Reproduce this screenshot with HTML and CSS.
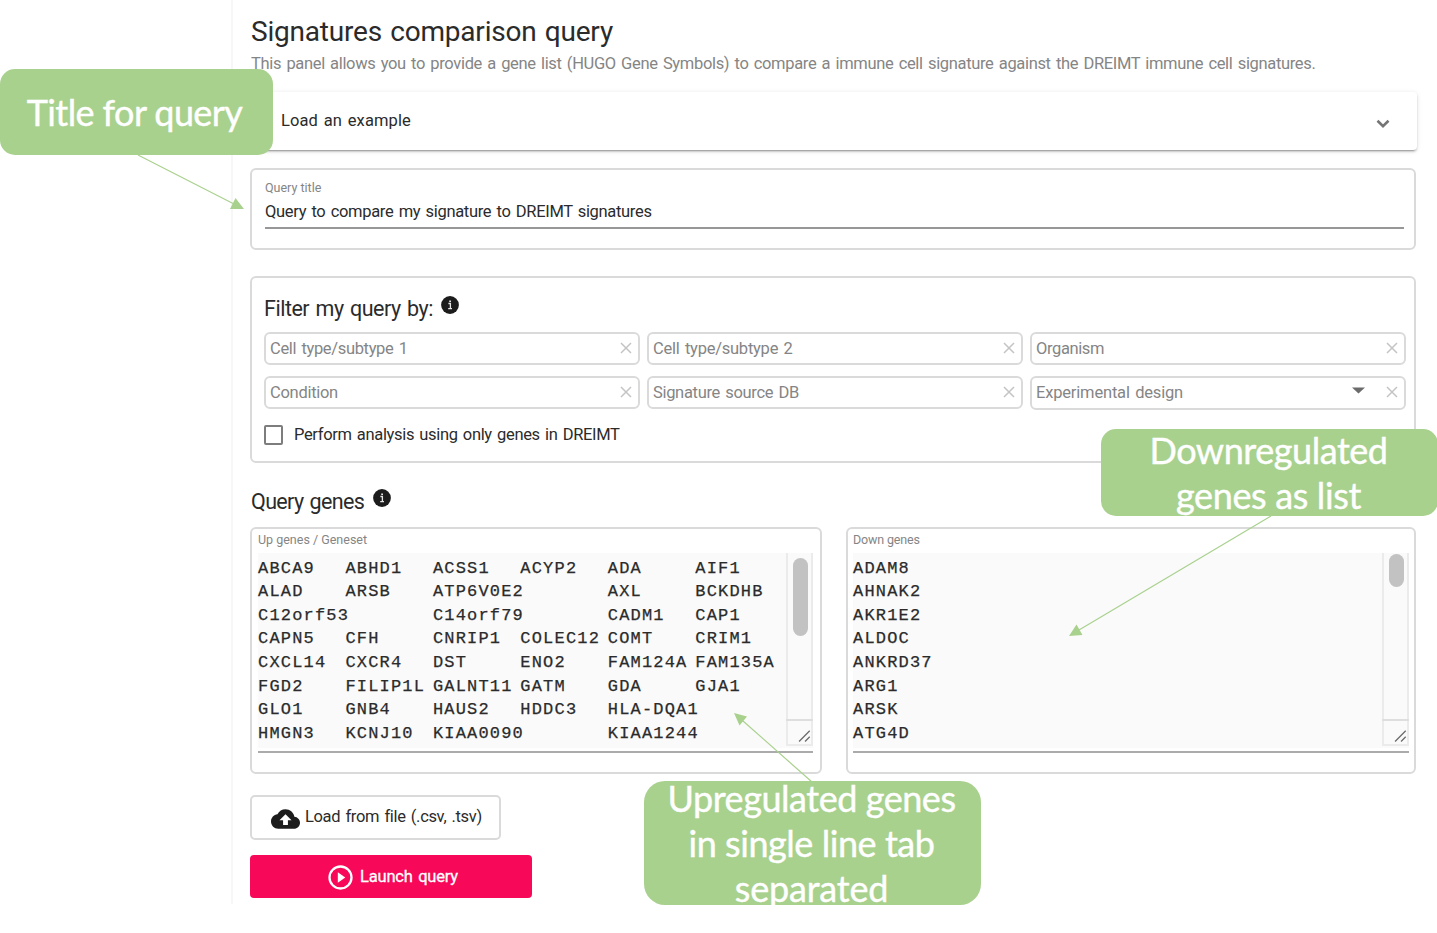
FILE: index.html
```html
<!DOCTYPE html>
<html lang="en">
<head>
<meta charset="utf-8">
<title>Signatures comparison query</title>
<link rel="stylesheet" href="styles.css">
</head>
<body>
<main class="panel">
  <h1 class="title">Signatures comparison query</h1>
  <p class="subtitle">This panel allows you to provide a gene list (HUGO Gene Symbols) to compare a immune cell signature against the DREIMT immune cell signatures.</p>

  <section class="expander">
    <span class="expander-label">Load an example</span>
    <svg class="chevron" width="14" height="10" viewBox="0 0 14 10"><path d="M1.500 1.800 7 7.200l5.500-5.400" fill="none" stroke="#757575" stroke-width="2.600"/></svg>
  </section>

  <section class="box query-title">
    <label class="small">Query title</label>
    <div class="title-input">Query to compare my signature to DREIMT signatures</div>
  </section>

  <section class="box filters">
    <h2 class="heading filter-heading"><span>Filter my query by:</span><svg class="info" width="18" height="18" viewBox="0 0 18 18"><circle cx="9" cy="9" r="8.900" fill="#1c1c1c"/><path d="M7.400 7.500h2v5M7.200 12.700h3.800" fill="none" stroke="#e4e4e4" stroke-width="1.300"/><path d="M8.200 4.400h1.800v1.700H8.200z" fill="#e4e4e4"/></svg></h2>
    <div class="grid">
      <div class="field"><span class="f-cell1">Cell type/subtype 1</span><svg class="x" width="12" height="12" viewBox="0 0 12 12"><path d="M1 1l10 10M11 1 1 11"/></svg></div>
      <div class="field"><span class="f-cell2">Cell type/subtype 2</span><svg class="x" width="12" height="12" viewBox="0 0 12 12"><path d="M1 1l10 10M11 1 1 11"/></svg></div>
      <div class="field"><span class="f-organism">Organism</span><svg class="x" width="12" height="12" viewBox="0 0 12 12"><path d="M1 1l10 10M11 1 1 11"/></svg></div>
      <div class="field"><span class="f-condition">Condition</span><svg class="x" width="12" height="12" viewBox="0 0 12 12"><path d="M1 1l10 10M11 1 1 11"/></svg></div>
      <div class="field"><span class="f-source">Signature source DB</span><svg class="x" width="12" height="12" viewBox="0 0 12 12"><path d="M1 1l10 10M11 1 1 11"/></svg></div>
      <div class="field select"><span class="f-design">Experimental design</span><svg class="caret" width="13" height="7" viewBox="0 0 13 7"><path d="M0 .5h13L6.500 6.500z" fill="#6b6b6b"/></svg><svg class="x" width="12" height="12" viewBox="0 0 12 12"><path d="M1 1l10 10M11 1 1 11"/></svg></div>
    </div>
    <div class="check"><span class="checkbox"></span><span>Perform analysis using only genes in DREIMT</span></div>
  </section>

  <h2 class="heading genes-heading"><span>Query genes</span><svg class="info" width="18" height="18" viewBox="0 0 18 18"><circle cx="9" cy="9" r="8.900" fill="#1c1c1c"/><path d="M7.400 7.500h2v5M7.200 12.700h3.800" fill="none" stroke="#e4e4e4" stroke-width="1.300"/><path d="M8.200 4.400h1.800v1.700H8.200z" fill="#e4e4e4"/></svg></h2>
  <div class="genes">
    <section class="box gene-box">
      <label class="small">Up genes / Geneset</label>
      <div class="area">
<pre class="list">ABCA9	ABHD1	ACSS1	ACYP2	ADA	AIF1
ALAD	ARSB	ATP6V0E2	AXL	BCKDHB
C12orf53	C14orf79	CADM1	CAP1
CAPN5	CFH	CNRIP1	COLEC12	COMT	CRIM1
CXCL14	CXCR4	DST	ENO2	FAM124A	FAM135A
FGD2	FILIP1L	GALNT11	GATM	GDA	GJA1
GLO1	GNB4	HAUS2	HDDC3	HLA-DQA1
HMGN3	KCNJ10	KIAA0090	KIAA1244</pre>
        <div class="track"><div class="thumb thumb-up"></div><svg class="grip" width="27" height="27" viewBox="0 0 27 27"><path d="M13 24 25.500 11.500M20 24l5.500-5.500" fill="none" stroke="#6a6a6a" stroke-width="1.500"/></svg></div>
      </div>
    </section>
    <section class="box gene-box">
      <label class="small down-label">Down genes</label>
      <div class="area">
<pre class="list">ADAM8
AHNAK2
AKR1E2
ALDOC
ANKRD37
ARG1
ARSK
ATG4D</pre>
        <div class="track"><div class="thumb thumb-down"></div><svg class="grip" width="27" height="27" viewBox="0 0 27 27"><path d="M13 24 25.500 11.500M20 24l5.500-5.500" fill="none" stroke="#6a6a6a" stroke-width="1.500"/></svg></div>
      </div>
    </section>
  </div>

  <div class="load-button"><svg width="29" height="20" viewBox="0 0 24 16"><path fill="#1c1c1c" fill-rule="evenodd" d="M19.350 6.040C18.670 2.590 15.640 0 12 0 9.110 0 6.600 1.640 5.350 4.040 2.340 4.360 0 6.910 0 10c0 3.310 2.690 6 6 6h13c2.760 0 5-2.240 5-5 0-2.640-2.050-4.780-4.650-4.960zM14 9v4h-4V9H7l5-5 5 5z"/></svg><span>Load from file (.csv, .tsv)</span></div>
  <div class="launch-button"><svg width="25" height="25" viewBox="0 0 25 25"><circle cx="12.500" cy="12.500" r="11" fill="none" stroke="#fff" stroke-width="2.300"/><path d="M9.800 7.200v10.600l7.500-5.300z" fill="#fff"/></svg><span>Launch query</span></div>
</main>

<svg class="arrows" width="1437" height="933" viewBox="0 0 1437 933"><path stroke="#a9d18e" stroke-width="1.200" d="M138 155 234 204M1271 516 1079 630M812 782 743 721"/><path fill="#a9d18e" d="M244 209 235.500 198 230 209zM1069 636l7.500-11.500 6 10.500zM734 713l13 3.500-7.500 9z"/></svg>
<div class="callout c-title"><span>Title for query</span></div>
<div class="callout c-down"><span>Downregulated</span><span class="c-list">genes as list</span></div>
<div class="callout c-up"><span>Upregulated genes</span><span>in single line tab</span><span class="c-sep">separated</span></div>
</body>
</html>
```
FILE: styles.css
```css
* { box-sizing: border-box; }
body {
  margin: 0;
  width: 1437px;
  height: 933px;
  overflow: hidden;
  position: relative;
  background: #fff;
  color: #2b2b2b;
  font: 16.500px/20px Roboto, sans-serif;
  word-spacing: 1.500px;
  white-space: nowrap;
}
svg { display: block; flex: none; }
.panel {
  margin-left: 231px;
  width: 1206px;
  height: 904px;
  padding: 15px 20px 0 17px;
  border-left: 2px solid #f7f7f7;
}
.title { margin: 0 0 0 1px; font-size: 28px; line-height: 34px; font-weight: 400; letter-spacing: -.2px; }
.subtitle { margin: 5px 0 0 1px; color: #858585; letter-spacing: -.335px; }
.expander {
  display: flex;
  align-items: center;
  justify-content: space-between;
  height: 58px;
  margin-top: 18px;
  padding: 0 27px 0 31px;
  border-radius: 4px;
  box-shadow: 0 3px 1px -2px rgba(0,0,0,.2), 0 2px 2px rgba(0,0,0,.14), 0 1px 5px rgba(0,0,0,.12);
}
.expander-label { letter-spacing: .11px; }
.chevron { margin-top: 6px; }
.box { width: 1166px; border: 2px solid #dadada; border-radius: 6px; }
.small { display: block; font-size: 12.500px; line-height: 14px; word-spacing: 0; color: #858585; }
.query-title { height: 82px; margin-top: 18px; padding: 11px 10px 0 13px; }
.title-input { height: 34px; padding-top: 7px; border-bottom: 2px solid #979797; letter-spacing: -.32px; }
.filters { height: 187px; margin-top: 26px; padding: 17px 8px 0 12px; }
.heading { display: flex; margin: 0; font-size: 21.500px; line-height: 28px; font-weight: 400; }
.info { margin-top: 1px; }
.filter-heading { letter-spacing: -.48px; }
.filter-heading .info { margin-left: 8px; }
.genes-heading .info { margin-left: 9px; }
.grid { display: grid; grid-template-columns: repeat(3, 376px); column-gap: 7px; row-gap: 11px; margin-top: 9px; }
.field {
  display: flex;
  align-items: center;
  height: 33px;
  padding: 0 6px 0 4px;
  border: 2px solid #dadada;
  border-radius: 6px;
  color: #858585;
}
.f-cell1 { letter-spacing: -.34px; }
.f-cell2 { letter-spacing: -.24px; }
.f-organism { letter-spacing: -.39px; }
.f-condition { letter-spacing: -.29px; }
.f-source { letter-spacing: -.32px; }
.f-design { letter-spacing: -.18px; }
.select { height: 34px; padding-bottom: 1px; }
.x { margin-left: auto; margin-top: -1px; fill: none; stroke: #c4c4c4; stroke-width: 1.500; }
.caret { margin-left: auto; margin-top: -5px; }
.caret + .x { margin-left: 21px; }
.check { display: flex; align-items: center; gap: 11px; margin-top: 15px; letter-spacing: -.34px; }
.checkbox { width: 19px; height: 20px; border: 2px solid #7d7d7d; border-radius: 2px; }
.genes-heading { margin: 25px 0 0 1px; letter-spacing: -.66px; }
.genes { display: flex; gap: 24px; margin-top: 11px; }
.gene-box { width: 572px; height: 247px; padding: 4px 7px 0 6px; }
.gene-box + .gene-box { width: 570px; padding-left: 5px; padding-right: 5px; }
.down-label { letter-spacing: -.17px; }
.area { display: flex; justify-content: space-between; height: 200px; margin-top: 6px; border-bottom: 2px solid #ababab; background: linear-gradient(#fafafa 195px, #fff 195px); }
.list {
  margin: 3.500px 0 0;
  font: 17px/23.650px "Liberation Mono", monospace;
  letter-spacing: 1.180px;
  word-spacing: 0;
  tab-size: 87.450px;
  color: #2b2b2b;
  -webkit-text-stroke: .25px #2b2b2b;
}
.track { display: flex; flex-direction: column; justify-content: space-between; align-items: center; width: 27px; height: 193px; border: solid #ebebeb; border-width: 0 2px; }
.thumb { width: 15px; border-radius: 8px; background: #c2c2c2; transform: translateX(1px); }
.thumb-up { height: 78px; margin-top: 5px; }
.thumb-down { height: 33px; margin-top: 1px; }
.grip { border-top: 2px solid #dedede; border-bottom: 2px solid #ebebeb; overflow: visible; }
.load-button { display: flex; align-items: center; gap: 5px; width: 251px; height: 45px; margin-top: 21px; padding: 0 0 1px 19px; border: 2px solid #dadada; border-radius: 5px; letter-spacing: -.34px; }
.load-button svg { margin-top: 3px; }
.launch-button { display: flex; align-items: center; gap: 7px; width: 282px; height: 43px; margin-top: 15px; padding-left: 78px; border-radius: 4px; background: #f80859; color: #fff; letter-spacing: -.18px; -webkit-text-stroke: .3px #fff; }
.launch-button svg { margin-top: 1px; }
.arrows { position: absolute; left: 0; top: 0; }
.callout {
  position: absolute;
  display: flex;
  flex-direction: column;
  align-items: center;
  justify-content: center;
  padding-right: 2px;
  background: #a9d18e;
  color: #fff;
  font: 36px/45px Lato, sans-serif;
  letter-spacing: -.45px;
  word-spacing: 0;
  -webkit-text-stroke: .4px #fff;
}
.c-title { left: 0; top: 69px; width: 273px; height: 86px; padding-right: 4px; border-radius: 15px; letter-spacing: -.58px; }
.c-down { left: 1101px; top: 429px; width: 337px; height: 87px; border-radius: 15px; }
.c-list { letter-spacing: -.36px; }
.c-up { left: 644px; top: 781px; width: 337px; height: 124px; border-radius: 21px; }
.c-sep { letter-spacing: -.2px; }
```
